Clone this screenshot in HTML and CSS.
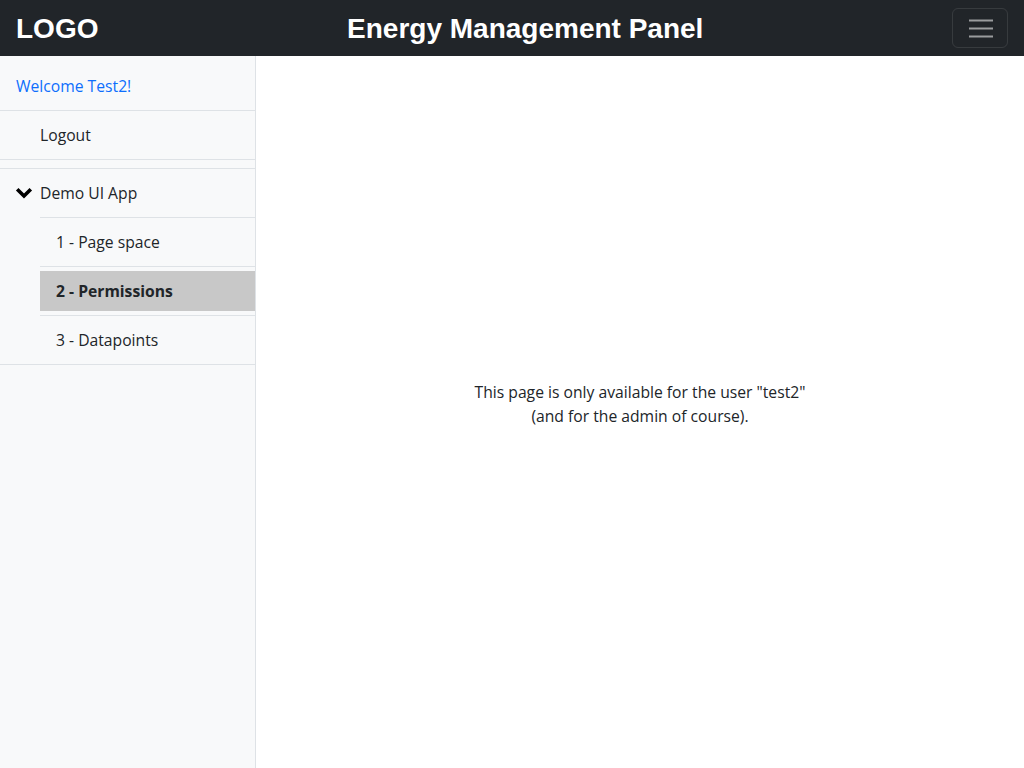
FILE: index.html
```html
<!DOCTYPE html>
<html lang="en">
<head>
<meta charset="utf-8">
<title>Energy Management Panel</title>
<link rel="stylesheet" href="styles.css">
</head>
<body>
<header class="topbar">
  <div class="logo">LOGO</div>
  <div class="title">Energy Management Panel</div>
  <button class="toggler" type="button" aria-label="Toggle navigation">
    <svg width="30" height="30" viewBox="0 0 30 30" aria-hidden="true">
      <path d="M4 7.5h24M4 15.5h24M4 23.5h24" stroke="rgba(255,255,255,0.55)" stroke-width="2" stroke-linecap="butt" fill="none"/>
    </svg>
  </button>
</header>
<div class="layout">
  <aside class="sidebar">
    <div class="welcome">Welcome Test2!</div>
    <div class="logout">Logout</div>
    <div class="group">
      <div class="group-head">
        <svg class="chev" width="18" height="12" viewBox="0 0 18 12" aria-hidden="true">
          <path d="M2.2 2.2L9 9L15.8 2.2" stroke="#000" stroke-width="3.6" fill="none" stroke-linecap="butt" stroke-linejoin="miter"/>
        </svg>
        <span>Demo UI App</span>
      </div>
      <div class="sub"><a class="sub-link">1 - Page space</a></div>
      <div class="sub"><a class="sub-link active">2 - Permissions</a></div>
      <div class="sub"><a class="sub-link">3 - Datapoints</a></div>
    </div>
  </aside>
  <main class="content">
    <p class="notice">This page is only available for the user "test2"<br>(and for the admin of course).</p>
  </main>
</div>
</body>
</html>
```
FILE: styles.css
```css
* { box-sizing: border-box; }
html, body { margin: 0; padding: 0; height: 100%; }
body {
  font-family: "Open Sans", Lato, sans-serif;
  font-size: 15.7px;
  line-height: 24px;
  color: #212529;
  background: #fff;
  display: flex;
  flex-direction: column;
}
.topbar {
  height: 56px;
  flex: none;
  background: #212529;
  display: flex;
  align-items: center;
  justify-content: space-between;
  padding: 0 16px;
  font-family: "Liberation Sans", Arial, sans-serif;
  font-weight: 700;
  font-size: 28px;
  color: #fff;
}
.logo, .title { line-height: 32px; padding-top: 2px; }
.toggler {
  width: 56px;
  height: 40px;
  padding: 4px 12px;
  background: transparent;
  border: 1px solid rgba(255,255,255,0.1);
  border-radius: 6px;
  display: flex;
  align-items: center;
  justify-content: center;
}
.toggler svg { display: block; }
.layout {
  flex: 1;
  display: flex;
  min-height: 0;
}
.sidebar {
  width: 256px;
  flex: none;
  background: #f8f9fa;
  border-right: 1px solid #dee2e6;
}
.welcome {
  padding: 18px 16px 12px;
  color: #0d6efd;
  border-bottom: 1px solid #dee2e6;
}
.logout {
  padding: 12px 16px 12px 40px;
  border-bottom: 1px solid #dee2e6;
}
.group {
  margin-top: 8px;
  border-top: 1px solid #dee2e6;
  border-bottom: 1px solid #dee2e6;
}
.group-head {
  display: flex;
  align-items: center;
  padding: 12px 16px 12px 15px;
  height: 48px;
}
.chev { display: block; margin-right: 7px; }
.sub {
  margin-left: 40px;
  border-top: 1px solid #dee2e6;
  padding: 4px 0;
}
.sub-link {
  display: block;
  padding: 8px 16px;
  color: #212529;
}
.sub-link.active {
  background: #c8c8c8;
  font-weight: 700;
}
.content {
  flex: 1;
  display: flex;
  align-items: center;
  justify-content: center;
}
.notice {
  margin: 0 0 16px;
  text-align: center;
}
```
